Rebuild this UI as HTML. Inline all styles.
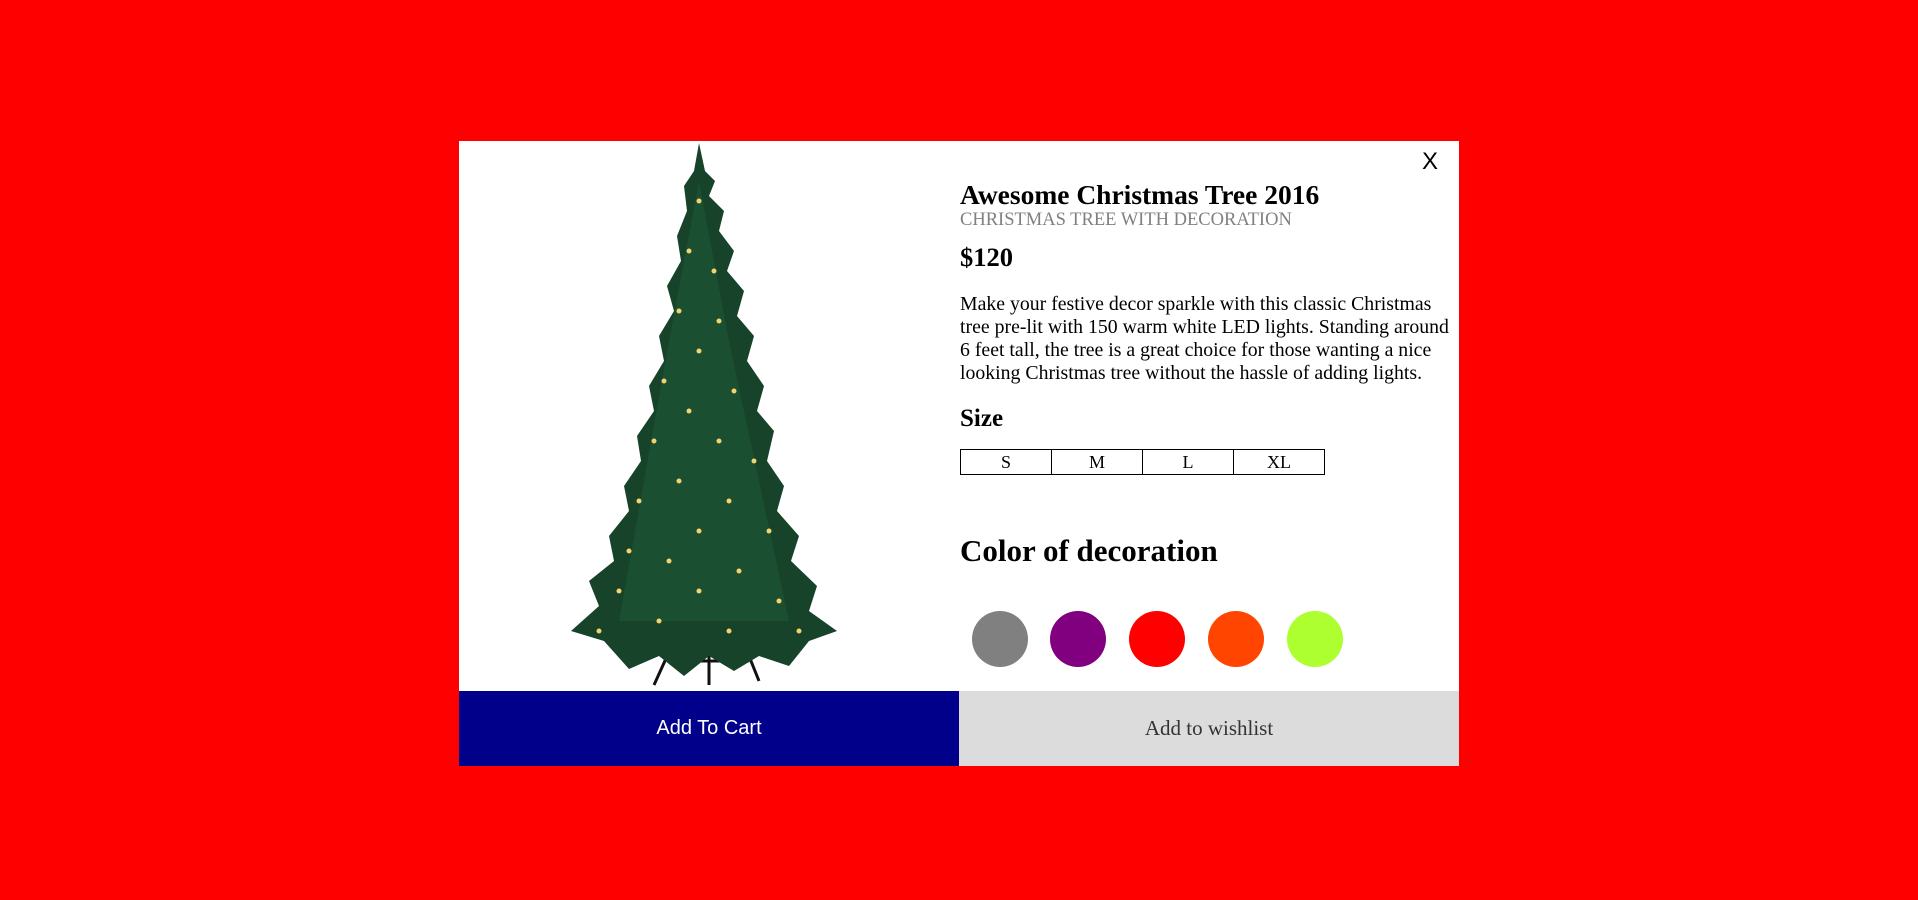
<!DOCTYPE html>
<html><head><meta charset="utf-8"><style>
body{margin:0;background:#f00;width:1918px;height:900px;overflow:hidden;font-family:"Liberation Serif",serif}
.m{position:absolute;left:459px;top:141px;width:1000px;height:625px;background:#fff}
.t{position:absolute;left:501px;}
.x{position:absolute;left:963px;top:7px;font:24px "Liberation Sans",sans-serif}
table{border-collapse:collapse;position:absolute;left:501px;top:308px}
td{border:1px solid #000;width:90px;height:24px;text-align:center;font-size:18px;padding:0;line-height:24px}
.c{position:absolute;top:470px;width:56px;height:56px;border-radius:50%}
.b{position:absolute;top:550px;height:75px;width:500px;text-align:center;line-height:75px}
</style></head><body>
<div class="m">
<svg style="position:absolute;left:100px;top:0" width="300" height="550" viewBox="0 0 300 550">
<path d="M124 480 L95 544 M150 480 L150 544 M176 480 L200 540 M110 520 L190 520" stroke="#111" stroke-width="3" fill="none"/>
<path d="M140 2 L146 30 L156 40 L150 55 L165 70 L160 90 L175 110 L168 130 L185 150 L178 175 L195 195 L188 220 L205 245 L198 270 L215 290 L208 320 L225 345 L218 370 L240 395 L232 420 L258 445 L250 470 L278 490 L250 500 L230 525 L200 515 L175 530 L150 515 L125 535 L100 515 L70 528 L45 500 L12 490 L40 465 L30 440 L55 420 L50 395 L70 370 L65 345 L82 320 L78 295 L95 270 L90 245 L105 220 L100 195 L115 170 L108 145 L122 120 L118 95 L128 70 L125 45 L135 30 Z" fill="#16432a"/>
<path d="M140 40 L170 200 L230 480 L60 480 L110 200 Z" fill="#1d5434" opacity=".7"/>
<g fill="#f5d36a">
<circle cx="140" cy="60" r="2.5"/><circle cx="130" cy="110" r="2.5"/><circle cx="155" cy="130" r="2.5"/><circle cx="120" cy="170" r="2.5"/><circle cx="160" cy="180" r="2.5"/><circle cx="140" cy="210" r="2.5"/><circle cx="105" cy="240" r="2.5"/><circle cx="175" cy="250" r="2.5"/><circle cx="130" cy="270" r="2.5"/><circle cx="95" cy="300" r="2.5"/><circle cx="160" cy="300" r="2.5"/><circle cx="195" cy="320" r="2.5"/><circle cx="120" cy="340" r="2.5"/><circle cx="80" cy="360" r="2.5"/><circle cx="170" cy="360" r="2.5"/><circle cx="140" cy="390" r="2.5"/><circle cx="210" cy="390" r="2.5"/><circle cx="70" cy="410" r="2.5"/><circle cx="110" cy="420" r="2.5"/><circle cx="180" cy="430" r="2.5"/><circle cx="60" cy="450" r="2.5"/><circle cx="140" cy="450" r="2.5"/><circle cx="220" cy="460" r="2.5"/><circle cx="100" cy="480" r="2.5"/><circle cx="170" cy="490" r="2.5"/><circle cx="40" cy="490" r="2.5"/><circle cx="240" cy="490" r="2.5"/>
</g></svg>
<div class="x">X</div>
<div class="t" style="top:38px;font-size:27.5px;font-weight:bold">Awesome Christmas Tree 2016</div>
<div class="t" style="top:69px;font-size:18.5px;color:#808080">CHRISTMAS TREE WITH DECORATION</div>
<div class="t" style="top:101px;font-size:26.5px;font-weight:bold">$120</div>
<div class="t" style="top:152px;font-size:19.8px;line-height:23px;width:500px">Make your festive decor sparkle with this classic Christmas tree pre&#8209;lit with 150 warm white LED lights. Standing around 6 feet tall, the tree is a great choice for those wanting a nice looking Christmas tree without the hassle of adding lights.</div>
<div class="t" style="top:264px;font-size:25px;font-weight:bold">Size</div>
<table><tr><td>S</td><td>M</td><td>L</td><td>XL</td></tr></table>
<div class="t" style="top:392px;font-size:31px;font-weight:bold">Color of decoration</div>
<div class="c" style="left:513px;background:#808080"></div>
<div class="c" style="left:591px;background:#800080"></div>
<div class="c" style="left:670px;background:#f00"></div>
<div class="c" style="left:749px;background:#ff4500"></div>
<div class="c" style="left:828px;background:#adff2f"></div>
<div class="b" style="left:0;background:#00008b;color:#fff;font:20px 'Liberation Sans',sans-serif;line-height:75px">Add To Cart</div>
<div class="b" style="left:500px;background:#dcdcdc;color:#333;font-size:21px">Add to wishlist</div>
</div>
</body></html>
